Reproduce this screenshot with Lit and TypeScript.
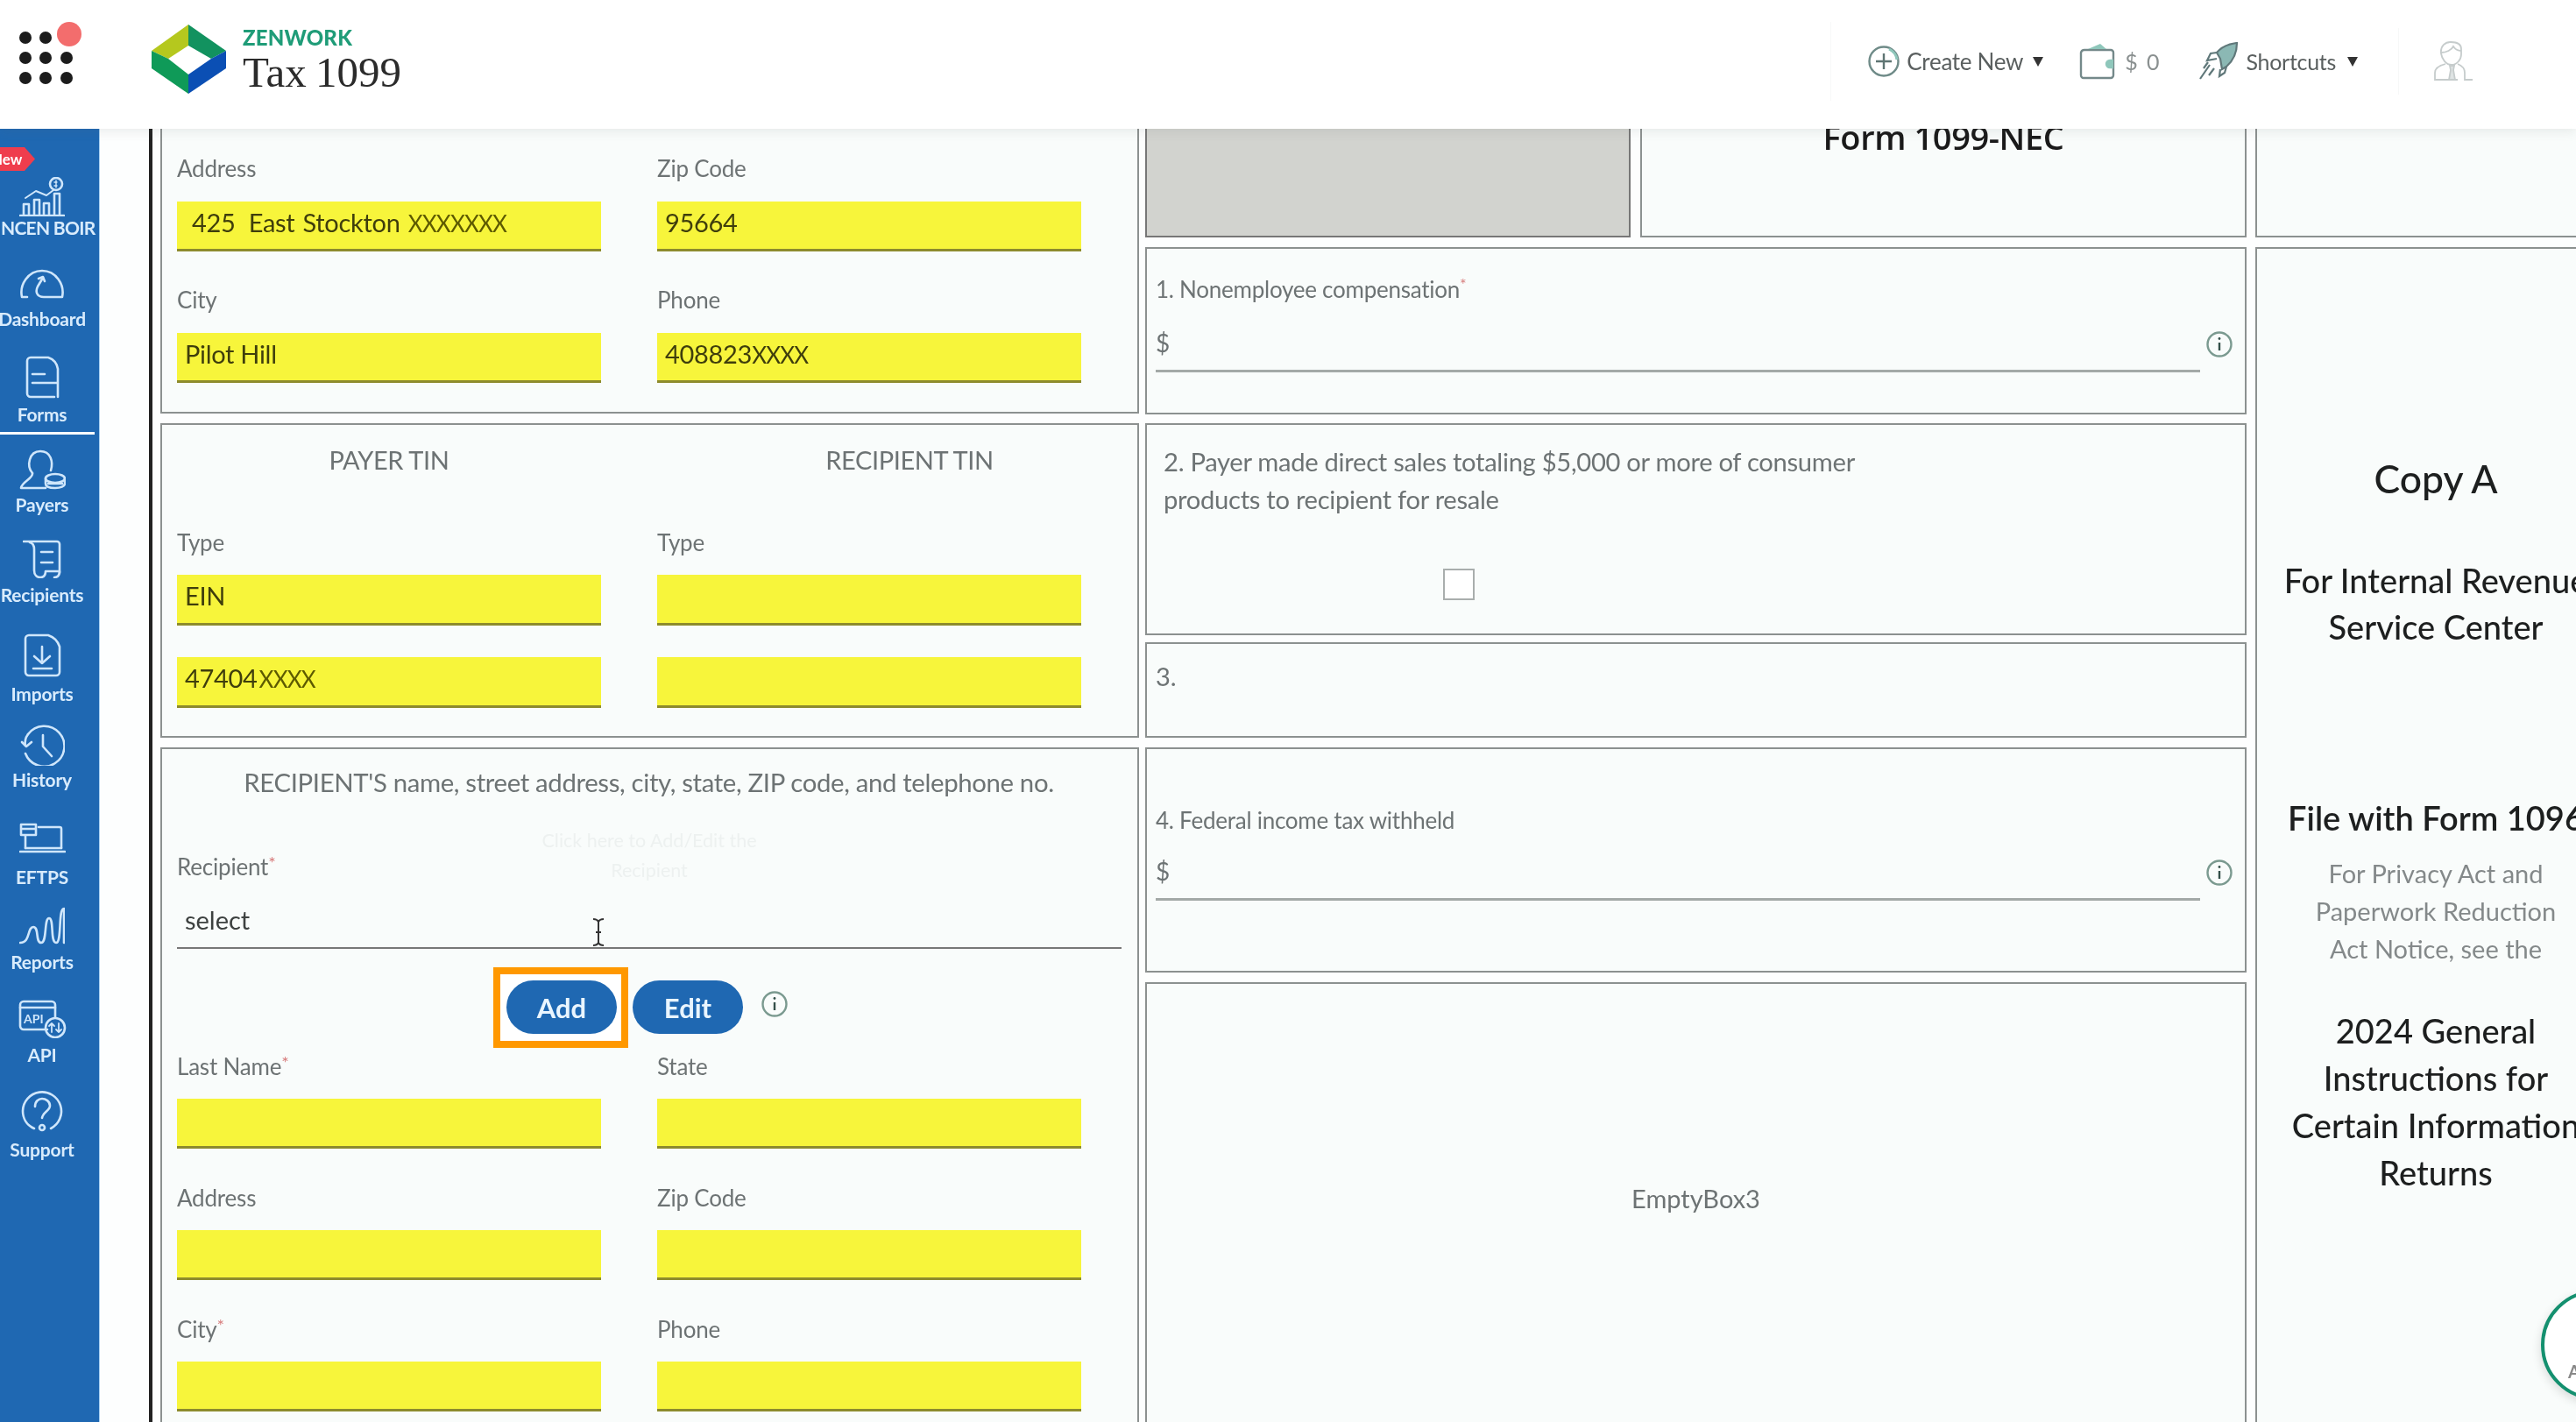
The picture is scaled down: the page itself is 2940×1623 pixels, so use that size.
import { LitElement, html, css, svg } from "lit";
import { customElement } from "lit/decorators.js";

const ic = (w: number, h: number, body: unknown) =>
  html`<svg class="ic" width=${w} height=${h} viewBox="0 0 ${w} ${h}" fill="none" stroke="#cfe6fb" stroke-width="2.6" stroke-linecap="round" stroke-linejoin="round">${body}</svg>`;

const nav = [
  { label: "INCEN BOIR", top: 0, gap: 1, shift: 8, icon: ic(52, 45, svg`
      <circle cx="42" cy="8" r="7"/><path d="M42 4v8M40 6h3M40 10h3" stroke-width="1.4"/>
      <path d="M1 44h50M5 43V31h6v12M17 43V26h6v17M28 43V30h6v13M40 43V19h6v24"/>
      <path d="M7 24l12-8 12 5 8-6" stroke-width="2"/>`) },
  { label: "Dashboard", top: 35, gap: 11, shift: 0, icon: ic(52, 34, svg`
      <path d="M9 32H3C0 18 10 2 26 2s26 16 23 30H28c-8 0-10-6-7-12l6-10"/><path d="M22 11l5-2 2 5"/>`) },
  { label: "Forms", top: 30, gap: 6, shift: 0, icon: ic(41, 49, svg`
      <path d="M34 47H7a4 4 0 0 1-4-4V6a4 4 0 0 1 4-4h20c6 2 10 7 11 13v32"/><path d="M9 21h14M9 31h28"/>`) },
  { label: "Payers", top: 28, gap: 5, shift: 0, icon: ic(53, 46, svg`
      <path d="M15 27C8 19 11 2 24 2c12 0 15 12 12 22"/><path d="M15 27c1 6-12 10-13 17h28"/>
      <ellipse cx="41" cy="33" rx="11" ry="5"/><path d="M30 33v6c0 4 5 5 11 5s11-2 11-5v-6M33 39h16"/>`) },
  { label: "Recipients", top: 28, gap: 7, shift: 0, icon: ic(44, 44, svg`
      <path d="M1 2h38a3 3 0 0 1 3 3v33"/><path d="M8 3c4 1 5 4 5 8v24c0 5 3 8 7 8s6-3 6-7h16c0 4-2 7-6 7"/>
      <path d="M21 14h13M21 26h13"/>`) },
  { label: "Imports", top: 32, gap: 7, shift: 0, icon: ic(43, 50, svg`
      <path d="M6 2h22c6 2 11 7 13 13v29a4 4 0 0 1-4 4H6a4 4 0 0 1-4-4V6a4 4 0 0 1 4-4z"/>
      <path d="M21 15v19M12 26l9 8 9-8M11 40h21"/>`) },
  { label: "History", top: 22, gap: 4, shift: 0, icon: ic(51, 48, svg`
      <path d="M9 12A23 23 0 1 1 6 34"/><path d="M2 21l5 5 6-5"/><path d="M6 25c-1-5 0-9 3-13"/><path d="M26 13v13l10 11"/>`) },
  { label: "EFTPS", top: 37, gap: 14, shift: 0, icon: ic(53, 36, svg`
      <path d="M2 2h17v12H2zM2 7h17"/><path d="M22 5h24a2 2 0 0 1 2 2v22M7 15v14"/><path d="M1 33h51"/><path d="M7 29h41"/>`) },
  { label: "Reports", top: 22, gap: 8, shift: 0, icon: ic(52, 43, svg`
      <path d="M1 41c12 0 8-18 15-18s2 18 9 18 3-28 9-28 1 28 8 28 2-39 9-39v39"/>`) },
  { label: "API", top: 31, gap: 7, shift: 0, icon: ic(55, 44, svg`
      <path d="M33 34H6a4 4 0 0 1-4-4V6a4 4 0 0 1 4-4h32a4 4 0 0 1 4 4v14"/><path d="M2 9h40"/>
      <circle cx="42" cy="32" r="11"/><path d="M38 27v10M35 30l3-3 3 3M46 27v10M43 34l3 3 3-3" stroke-width="1.8"/>
      <text x="6" y="27" fill="#cfe6fb" stroke="none" font-family="Lato" font-weight="700" font-size="14">API</text>`) },
  { label: "Support", top: 28, gap: 8, shift: 0, icon: ic(49, 48, svg`
      <path d="M15 44C6 40 2 32 2 24a22 22 0 1 1 32 20"/><path d="M16 19c0-6 4-9 8-9s9 3 9 8c0 6-8 7-9 14"/><circle cx="24" cy="43" r="3"/>`) },
];

const info = html`<svg class="info" width="32" height="32" viewBox="0 0 32 32" fill="none" stroke="#7b9a90" stroke-width="2.4">
  <circle cx="16" cy="16" r="13.5"/><path d="M16 14v9" stroke="#34504a"/><circle cx="16" cy="9.5" r="1.4" fill="#34504a" stroke="none"/></svg>`;

@customElement("app-root")
export class AppRoot extends LitElement {
  static styles = css`
    :host { display: block; position: relative; width: 2940px; height: 1623px; overflow: hidden; background: #fdfefe; font-family: "Lato", "Liberation Sans", sans-serif; filter: blur(.55px); }
    * { box-sizing: border-box; }
    svg { display: block; flex: none; }

    .top { position: relative; z-index: 2; height: 147px; background: #fff; box-shadow: 0 3px 12px rgba(90,100,100,.12); display: flex; align-items: flex-start; }
    .apps { margin-left: 20px; }
    .mark { margin-left: 73px; }
    .brand { margin: 28px 0 0 19px; }
    .zen { font: 900 24px/30px "Lato", sans-serif; color: #1f9c78; letter-spacing: .2px; }
    .tax { font: 400 49px/49px "Liberation Serif", serif; color: #2b2b2b; word-spacing: -2px; }
    .acts { margin-left: auto; margin-right: 117px; margin-top: 25px; height: 90px; display: flex; align-items: center; border-left: 1px solid #f7f8f8; color: #5a5f5f; font-size: 26px; letter-spacing: -.3px; padding-left: 42px; }
    .sc { font-size: 25px; }
    .m8 { margin-left: 8px; } .m11 { margin-left: 11px; } .m41 { margin-left: 41px; } .m15 { margin-left: 11px; }
    .m43 { margin-left: 43px; } .m9 { margin-left: 9px; } .m13 { margin-left: 13px; }
    .caret { width: 0; height: 0; border-left: 6px solid transparent; border-right: 6px solid transparent; border-top: 11px solid #333; flex: none; }
    .user { margin-left: 46px; border-left: 1px solid #f7f8f8; padding-left: 39px; height: 76px; display: flex; align-items: center; }
    .zero { letter-spacing: 2px; color: #8a9090; font-size: 25px; }

    .body { display: flex; height: 1476px; overflow: hidden; }
    .side { position: relative; width: 114px; flex: none; background: #1f68b2; padding-top: 55px; color: #d8ebfc; font-size: 21px; font-weight: 700; }
    .side::after { content: ""; position: absolute; top: 0; bottom: 0; right: 0; width: 1px; background: #a9d1f2; }
    .new { position: absolute; left: 0; top: 21px; width: 40px; height: 27px; overflow: hidden; background: #ef3d4d; color: #fff; font-size: 17px; line-height: 27px; text-indent: -10px; clip-path: polygon(0 0, 28px 0, 40px 50%, 28px 100%, 0 100%); white-space: nowrap; }
    .item { position: relative; width: 96px; display: flex; flex-direction: column; align-items: center; }
    .item span { line-height: 24px; white-space: nowrap; letter-spacing: -.2px; }
    .item span.tight { letter-spacing: -.7px; }
    .item.on::after { content: ""; position: absolute; left: 0; bottom: -11px; width: 108px; height: 3px; background: #fff; }

    .sheet { margin-left: 56px; border-left: 4px solid #222; padding-left: 9px; display: flex; align-items: flex-start; height: 1476px; }
    .col { display: flex; flex-direction: column; flex: none; }
    .left { width: 1117px; margin-right: 7px; }
    .mid { width: 1257px; margin-right: 10px; }
    .right { width: 412px; }
    .box { position: relative; background: #f9fcfb; border: 2px solid #8c9190; flex: none; }
    .open { border-top: 0; }
    .g11 { margin-top: 11px; } .g10 { margin-top: 10px; } .g8 { margin-top: 8px; }

    .a { height: 325px; padding: 31px 0 0 17px; }
    .b { height: 359px; padding: 0 0 0 17px; }
    .c { height: 780px; padding: 21px 0 0 17px; }
    .fields { display: grid; grid-template-columns: 484px 484px; column-gap: 64px; row-gap: 41px; }
    .lab { font-size: 26px; line-height: 30px; height: 52px; color: #6d7374; letter-spacing: -.2px; }
    .a .lab { line-height: 28px; }
    .lab i { color: #d77c7c; font-style: normal; font-size: 20px; line-height: 20px; vertical-align: top; }
    .inp { height: 57px; background: #f7f53b; border-bottom: 3px solid #8d8b2d; padding-left: 9px; font-size: 29px; line-height: 48px; color: #3f3e0c; letter-spacing: -.3px; }
    .addr { padding-left: 17px; word-spacing: 2px; }
    .num { margin-right: 6px; }
    .xx { color: #5d5a00; font-size: 26px; letter-spacing: -.8px; }
    .dk { color: #3f3e0c; }
    .sp { margin-left: 2px; }
    .tin { display: grid; grid-template-columns: 484px 484px; column-gap: 64px; height: 119px; padding-top: 23px; font-size: 29px; line-height: 34px; color: #6d7374; text-align: center; letter-spacing: -.4px; }
    .tin span:last-child { position: relative; left: 46px; }
    .b .inp { height: 58px; }
    .gap36 { margin-top: 36px; }
    .ctitle { font-size: 29.35px; line-height: 34px; color: #6d7374; text-align: center; padding-right: 19px; letter-spacing: -.35px; }
    .c .l2 { margin-top: 64px; height: auto; }
    .sel { width: 1078px; height: 64px; border-bottom: 2px solid #777; padding: 14px 0 0 9px; font-size: 29px; line-height: 34px; color: #3d4140; margin-top: 15px; }
    .tip { position: absolute; left: 406px; top: 87px; width: 300px; text-align: center; color: #edf1f0; font-size: 21.5px; line-height: 34px; }
    .cursor { position: absolute; left: 490px; top: 193px; }
    .btns { display: flex; align-items: center; height: 61px; margin: 36px 0 22px 376px; }
    .btn { position: relative; height: 61px; width: 126px; border-radius: 31px; background: #1f68b2; color: #e9f5ff; font-size: 31px; font-weight: 700; display: flex; align-items: center; justify-content: center; }
    .hl { position: relative; }
    .hl::before { content: ""; position: absolute; inset: -15px -13px -16px -15px; border: 8px solid #ff9800; background: #fff; }
    .edit { margin-left: 18px; }
    .btns .info { margin: -8px 0 0 20px; }

    .grey { width: 554px; height: 124px; background: #d2d3cf; border: 2px solid #777; border-top: 0; flex: none; }
    .fr { display: flex; }
    .nec { margin-left: 11px; width: 692px; height: 124px; text-align: center; font: 600 38px/18px "Open Sans", sans-serif; color: #1a1a1a; overflow: hidden; letter-spacing: -.4px; }
    .m1 { height: 191px; padding: 31px 0 0 10px; }
    .m2 { height: 242px; padding: 20px 0 0 19px; font-size: 29.2px; line-height: 43px; color: #6d7374; letter-spacing: -.3px; }
    .m3 { height: 109px; padding: 20px 0 0 10px; font-size: 29px; line-height: 34px; color: #6d7374; }
    .m4 { height: 257px; padding: 66px 0 0 10px; }
    .m4 .mrow { margin-top: 17px; }
    .m5 { height: 510px; display: block; text-align: center; padding-top: 228px; font-size: 29px; line-height: 34px; color: #6d7374; }
    .mlab { font-size: 26px; line-height: 30px; color: #6d7374; letter-spacing: -.25px; }
    .mlab i { color: #d77c7c; font-style: normal; font-size: 18px; line-height: 18px; vertical-align: top; }
    .mrow { display: flex; align-items: flex-end; margin-top: 20px; }
    .minp { width: 1192px; height: 60px; border-bottom: 3px solid #a3a9a7; font-size: 28px; line-height: 52px; color: #6d7374; }
    .mrow .info { margin: 0 0 16px 6px; }
    .check { width: 36px; height: 36px; background: #fff; border: 2px solid #a9aead; margin: 58px 0 0 319px; }

    .rtop { height: 124px; }
    .copy { height: 1400px; text-align: center; padding-top: 235px; color: #1d1f1f; font-weight: 500; font-size: 38px; line-height: 52.5px; white-space: nowrap; }
    .h1 { font-size: 44.5px; line-height: 54px; }
    .mt65 { margin-top: 63px; } .mt166 { margin-top: 166px; font-weight: 600; }
    .fine { margin-top: 15px; font-size: 29px; line-height: 43px; color: #84898a; font-weight: 400; }
    .gen { margin-top: 45px; line-height: 54.3px; }

    .chat { position: absolute; z-index: 3; left: 2900px; top: 1472px; width: 126px; height: 126px; border-radius: 50%; border: 4px solid #14906f; background: #fff; box-shadow: 0 4px 12px rgba(0,0,0,.14); padding: 77px 0 0 27px; font-size: 20px; font-weight: 700; color: #888; line-height: 24px; }
  `;

  private field(label: string, req = false, val: unknown = "", cls = "") {
    return html`<div><div class="lab">${label}${req ? html`<i>*</i>` : ""}</div><div class="inp ${cls}">${val}</div></div>`;
  }

  private money(label: unknown) {
    return html`<div class="mlab">${label}</div>
      <div class="mrow"><div class="minp">$</div>${info}</div>`;
  }

  render() {
    return html`
      <header class="top">
        <svg class="apps" width="80" height="135" viewBox="20 0 80 135" fill="#1c1c1c">
          ${[[29, 43], [52, 43], [29, 66], [52, 66], [76, 66], [29, 89], [52, 89], [76, 89]].map(([x, y]) => svg`<circle cx=${x} cy=${y} r="7"/>`)}
          <circle cx="79" cy="39" r="14" fill="#f36d6d"/>
        </svg>
        <svg class="mark" width="85" height="135" viewBox="173 0 85 135">
          <polygon points="215,28 215,52 192,67 173,58" fill="#b5c81e"/>
          <polygon points="215,28 258,58 241,67 215,52" fill="#12925f"/>
          <polygon points="173,58 192,67 215,85 215,107 173,78" fill="#0f9a58"/>
          <polygon points="258,58 258,78 215,107 215,85 241,67" fill="#0b4fb4"/>
        </svg>
        <div class="brand"><div class="zen">ZENWORK</div><div class="tax">Tax 1099</div></div>
        <div class="acts">
          <svg width="36" height="38" viewBox="0 0 36 38" fill="none" stroke="#6f8b88" stroke-width="2.4"><circle cx="18" cy="19" r="16.5"/><path d="M18 10v18M9 19h18" stroke="#5f7573"/><path d="M24 5a16 16 0 0 1 9 12" stroke="#8fc7bb" stroke-width="3"/></svg>
          <span class="m8">Create New</span><span class="caret m11"></span>
          <svg class="m41" width="41" height="42" viewBox="0 0 41 42" fill="none" stroke="#74898a" stroke-width="2.4"><path d="M6 8h30a3 3 0 0 1 3 3v26a3 3 0 0 1-3 3H5a3 3 0 0 1-3-3V11a4 4 0 0 1 4-3z"/><path d="M10 7l14-6 7 6z" fill="#8fc7bb" stroke="none"/><path d="M39 20h-4a4 4 0 0 0 0 8h4" fill="#8fc7bb" stroke="#8fc7bb"/></svg>
          <span class="m15 zero">$ 0</span>
          <svg class="m43" width="45" height="44" viewBox="0 0 45 44" fill="none" stroke="#60787a" stroke-width="2.2"><path d="M20 12C26 5 34 2 43 1c0 10-4 20-12 27l-5 3-2-12z" fill="#8bb8b4"/><path d="M20 12l-7 1-4 8 11-2M31 28l-2 7-6 4 1-8"/><path d="M12 26L1 42M17 30l-6 8M10 23l-5 7"/></svg>
          <span class="m9 sc">Shortcuts</span><span class="caret m13"></span>
          <div class="user"><svg width="46" height="46" viewBox="0 0 46 46" fill="none" stroke="#c6cccc" stroke-width="1.8"><path d="M9 14C8 5 14 1 20 1s12 2 12 8v6c0 6-5 12-11 12S10 21 9 14z"/><path d="M9 13c6 0 12-3 14-7 2 3 5 5 9 5"/><path d="M14 26C6 28 2 31 2 36v8h26M28 26c5 2 8 5 8 10v8h9"/><path d="M19 28h5l-1 5 2 11h-7l2-11z" fill="#dfe4e4"/></svg></div>
        </div>
      </header>

      <div class="body">
        <nav class="side">
          <div class="new">New</div>
          ${nav.map((n) => html`<div class="item ${n.label === "Forms" ? "on" : ""}" style="margin-top:${n.top}px">
            ${n.icon}<span class=${n.shift ? "tight" : ""} style="margin-top:${n.gap}px;margin-left:${n.shift}px">${n.label}</span></div>`)}
        </nav>

        <main class="sheet">
          <div class="col left">
            <section class="box open a">
              <div class="fields">
                ${this.field("Address", false, html`<span class="num">425</span> East Stockton <span class="xx">XXXXXXX</span>`, "addr")}
                ${this.field("Zip Code", false, "95664")}
                ${this.field("City", false, "Pilot Hill")}
                ${this.field("Phone", false, html`408823<span class="xx dk">XXXX</span>`)}
              </div>
            </section>
            <section class="box b g11">
              <div class="tin"><span>PAYER TIN</span><span>RECIPIENT TIN</span></div>
              <div class="fields">
                ${this.field("Type", false, "EIN")}
                ${this.field("Type")}
              </div>
              <div class="fields gap36">
                <div class="inp">47404<span class="xx sp">XXXX</span></div>
                <div class="inp"></div>
              </div>
            </section>
            <section class="box c g11">
              <div class="ctitle">RECIPIENT'S name, street address, city, state, ZIP code, and telephone no.</div>
              <div class="tip">Click here to Add/Edit the<br />Recipient</div>
              <svg class="cursor" width="16" height="32" viewBox="0 0 16 32" fill="none" stroke="#333" stroke-width="2"><path d="M2 1c3 0 5 1 6 3 1-2 3-3 6-3M8 4v24M2 31c3 0 5-1 6-3 1 2 3 3 6 3M5 16h6" /></svg>
              <div class="lab l2">Recipient<i>*</i></div>
              <div class="sel">select</div>
              <div class="btns"><div class="hl"><div class="btn">Add</div></div><div class="btn edit">Edit</div>${info}</div>
              <div class="fields">
                ${this.field("Last Name", true)}
                ${this.field("State")}
                ${this.field("Address")}
                ${this.field("Zip Code")}
                ${this.field("City", true)}
                ${this.field("Phone")}
              </div>
            </section>
          </div>

          <div class="col mid">
            <div class="fr">
              <div class="grey"></div>
              <div class="box open nec">Form 1099-NEC</div>
            </div>
            <section class="box m1 g11">${this.money(html`1. Nonemployee compensation<i>*</i>`)}</section>
            <section class="box m2 g10">2. Payer made direct sales totaling $5,000 or more of consumer<br />products to recipient for resale<div class="check"></div></section>
            <section class="box m3 g8">3.</section>
            <section class="box m4 g11">${this.money("4. Federal income tax withheld")}</section>
            <section class="box m5 g11">EmptyBox3</section>
          </div>

          <div class="col right">
            <div class="box open rtop"></div>
            <section class="box copy g11">
              <div class="h1">Copy A</div>
              <div class="mt65">For Internal Revenue<br />Service Center</div>
              <div class="mt166">File with Form 1096</div>
              <div class="fine">For Privacy Act and<br />Paperwork Reduction<br />Act Notice, see the</div>
              <div class="gen">2024 General<br />Instructions for<br />Certain Information<br />Returns</div>
            </section>
          </div>
        </main>
      </div>
      <div class="chat">A</div>
    `;
  }
}
